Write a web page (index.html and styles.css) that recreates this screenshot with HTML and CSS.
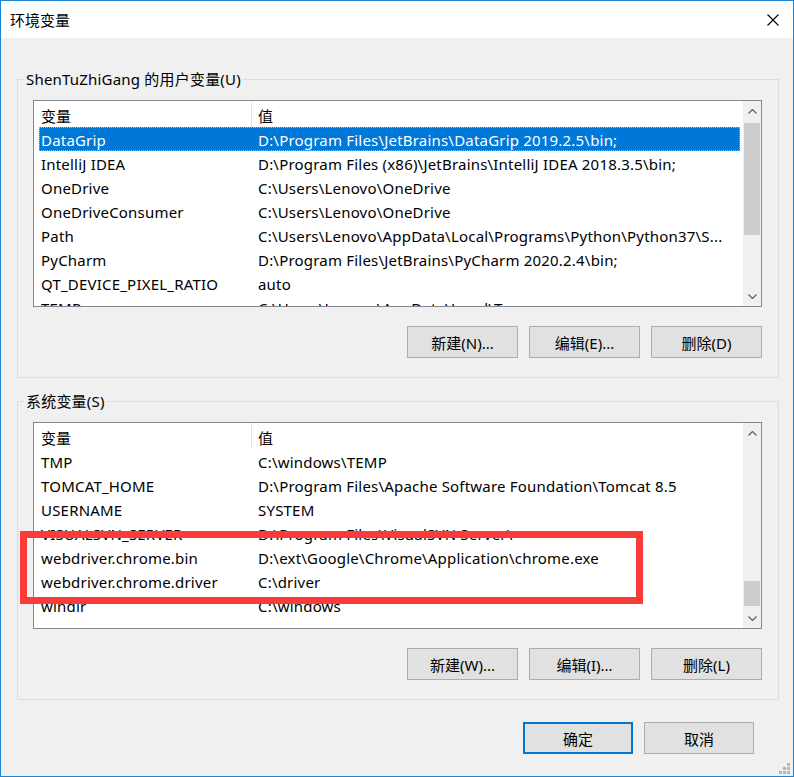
FILE: index.html
```html
<!DOCTYPE html>
<html lang="zh-CN">
<head>
    <meta charset="UTF-8">
    <title>环境变量</title>
    <link rel="stylesheet" href="styles.css">
</head>
<body>
<div class="window">

    <div class="titlebar">
        <span class="title">环境变量</span>
        <svg class="close" width="12" height="12" viewBox="0 0 12 12">
            <path d="M0.5 0.5 L11.5 11.5 M11.5 0.5 L0.5 11.5" stroke="#000" stroke-width="1.1" fill="none"/>
        </svg>
    </div>

    <!-- user variables -->
    <fieldset class="group group-user">
        <legend>ShenTuZhiGang 的用户变量(U)</legend>
        <div class="group-body">
            <div class="list">
                <div class="list-main">
                    <div class="list-head">
                        <div class="col-name">变量</div>
                        <div class="col-value">值</div>
                    </div>
                    <div class="rows">
                        <div class="row selected"><span class="name">DataGrip</span><span class="value">D:\Program Files\JetBrains\DataGrip 2019.2.5\bin;</span></div>
                        <div class="row"><span class="name">IntelliJ IDEA</span><span class="value">D:\Program Files (x86)\JetBrains\IntelliJ IDEA 2018.3.5\bin;</span></div>
                        <div class="row"><span class="name">OneDrive</span><span class="value">C:\Users\Lenovo\OneDrive</span></div>
                        <div class="row"><span class="name">OneDriveConsumer</span><span class="value">C:\Users\Lenovo\OneDrive</span></div>
                        <div class="row"><span class="name">Path</span><span class="value">C:\Users\Lenovo\AppData\Local\Programs\Python\Python37\S...</span></div>
                        <div class="row"><span class="name">PyCharm</span><span class="value">D:\Program Files\JetBrains\PyCharm 2020.2.4\bin;</span></div>
                        <div class="row"><span class="name">QT_DEVICE_PIXEL_RATIO</span><span class="value">auto</span></div>
                        <div class="row"><span class="name">TEMP</span><span class="value">C:\Users\Lenovo\AppData\Local\Temp</span></div>
                    </div>
                </div>
                <div class="scrollbar">
                    <div class="arrow">
                        <svg width="9" height="5" viewBox="0 0 9 5"><polyline points="0.5,4.5 4.5,0.5 8.5,4.5" fill="none" stroke="#606060" stroke-width="1.2"/></svg>
                    </div>
                    <div class="track"><div class="thumb thumb-user"></div></div>
                    <div class="arrow">
                        <svg width="9" height="5" viewBox="0 0 9 5"><polyline points="0.5,0.5 4.5,4.5 8.5,0.5" fill="none" stroke="#606060" stroke-width="1.2"/></svg>
                    </div>
                </div>
            </div>
            <div class="actions">
                <button>新建(N)...</button>
                <button>编辑(E)...</button>
                <button>删除(D)</button>
            </div>
        </div>
    </fieldset>

    <!-- system variables -->
    <fieldset class="group group-system">
        <legend>系统变量(S)</legend>
        <div class="group-body">
            <div class="list">
                <div class="list-main">
                    <div class="list-head">
                        <div class="col-name">变量</div>
                        <div class="col-value">值</div>
                    </div>
                    <div class="rows">
                        <div class="row"><span class="name">TMP</span><span class="value">C:\windows\TEMP</span></div>
                        <div class="row"><span class="name">TOMCAT_HOME</span><span class="value">D:\Program Files\Apache Software Foundation\Tomcat 8.5</span></div>
                        <div class="row"><span class="name">USERNAME</span><span class="value">SYSTEM</span></div>
                        <div class="row"><span class="name">VISUALSVN_SERVER</span><span class="value">D:\Program Files\VisualSVN Server\</span></div>
                        <div class="row"><span class="name">webdriver.chrome.bin</span><span class="value">D:\ext\Google\Chrome\Application\chrome.exe</span></div>
                        <div class="row"><span class="name">webdriver.chrome.driver</span><span class="value">C:\driver</span></div>
                        <div class="row"><span class="name">windir</span><span class="value">C:\windows</span></div>
                    </div>
                </div>
                <div class="scrollbar">
                    <div class="arrow">
                        <svg width="9" height="5" viewBox="0 0 9 5"><polyline points="0.5,4.5 4.5,0.5 8.5,4.5" fill="none" stroke="#606060" stroke-width="1.2"/></svg>
                    </div>
                    <div class="track"><div class="thumb thumb-system"></div></div>
                    <div class="arrow">
                        <svg width="9" height="5" viewBox="0 0 9 5"><polyline points="0.5,0.5 4.5,4.5 8.5,0.5" fill="none" stroke="#606060" stroke-width="1.2"/></svg>
                    </div>
                </div>
            </div>
            <div class="actions">
                <button>新建(W)...</button>
                <button>编辑(I)...</button>
                <button>删除(L)</button>
            </div>
        </div>
    </fieldset>

    <div class="footer">
        <button class="ok">确定</button>
        <button>取消</button>
    </div>

    <!-- highlight box around the webdriver entries -->
    <div class="mark"></div>

    <svg class="grip" width="11" height="11" viewBox="0 0 11 11">
        <rect x="8" y="0" width="3" height="3" fill="#b4b4b4"/>
        <rect x="4" y="4" width="3" height="3" fill="#b4b4b4"/>
        <rect x="8" y="4" width="3" height="3" fill="#b4b4b4"/>
        <rect x="0" y="8" width="3" height="3" fill="#b4b4b4"/>
        <rect x="4" y="8" width="3" height="3" fill="#b4b4b4"/>
        <rect x="8" y="8" width="3" height="3" fill="#b4b4b4"/>
    </svg>
</div>
</body>
</html>
```

FILE: styles.css
```css
body {
    margin: 0;
    font-family: "Noto Sans", "Noto Sans CJK SC", sans-serif;
    font-size: 15px;
    color: #000;
}

.window {
    position: relative;
    width: 794px;
    height: 777px;
    box-sizing: border-box;
    border: 1px solid #1a84d8;
    background: #f0f0f0;
    overflow: hidden;
}

/* Title bar */
.titlebar {
    height: 37px;
    background: #fff;
    display: flex;
    align-items: center;
    justify-content: space-between;
    padding: 0 14px 0 9px;
}

.title {
    font-family: "Noto Sans CJK SC", sans-serif;
    font-size: 15px;
}

/* Group boxes */
.group {
    border: 1px solid #dcdcdc;
    margin: 32px 14px 0 16px;
    padding: 0;
    min-width: 0;
}

.group-system {
    margin-top: 14px;
}

.group legend {
    margin-left: 6px;
    padding: 0 2px;
    line-height: 18px;
    font-family: "Noto Sans", "Noto Sans CJK SC", sans-serif;
    letter-spacing: 0.2px;
}

.group-body {
    padding: 12px 16px 19px 15px;
}

/* List view */
.list {
    display: flex;
    height: 207px;
    box-sizing: border-box;
    border: 1px solid #828790;
    background: #fff;
}

.list-main {
    flex: 1;
    overflow: hidden;
}

.list-head {
    display: flex;
    height: 26px;
    line-height: 30px;
    font-family: "Noto Sans CJK SC", sans-serif;
}

.col-name {
    width: 218px;
    flex: none;
    box-sizing: border-box;
    padding-left: 7px;
    border-right: 1px solid #e5e5e5;
}

.col-value {
    padding-left: 6px;
}

.rows {
    padding: 0 3px 0 5px;
}

.row {
    display: flex;
    height: 24px;
    line-height: 26px;
    white-space: nowrap;
    letter-spacing: 0.2px;
}

.row .name {
    width: 213px;
    flex: none;
    box-sizing: border-box;
    padding-left: 2px;
}

.row .value {
    padding-left: 6px;
}

.row.selected {
    background: #0078d7;
    color: #fff;
    outline: 1px dotted #f2a65a;
    outline-offset: -1px;
}

/* Scroll bar */
.scrollbar {
    width: 18px;
    flex: none;
    display: flex;
    flex-direction: column;
    background: #f0f0f0;
}

.arrow {
    height: 20px;
    display: flex;
    align-items: center;
    justify-content: center;
    flex: none;
}

.track {
    flex: 1;
}

.thumb {
    background: #cdcdcd;
    margin: 0 1px;
}

.thumb-user {
    margin-top: 2px;
    height: 112px;
}

.thumb-system {
    margin-top: 138px;
    height: 25px;
}

/* Buttons */
.actions {
    display: flex;
    justify-content: flex-end;
    gap: 11px;
    margin-top: 19px;
}

button {
    width: 111px;
    height: 32px;
    padding: 0;
    background: #e1e1e1;
    border: 1px solid #adadad;
    font-family: "Noto Sans", "Noto Sans CJK SC", sans-serif;
    font-size: 15px;
    color: #000;
}

.footer {
    display: flex;
    justify-content: flex-end;
    gap: 11px;
    margin: 22px 39px 0 0;
}

.footer button {
    width: 110px;
}

.footer .ok {
    border: 2px solid #0078d7;
}

.mark {
    position: absolute;
    left: 19px;
    top: 530px;
    width: 623px;
    height: 73px;
    box-sizing: border-box;
    border: 7px solid #fb3a3a;
}

.grip {
    position: absolute;
    right: 3px;
    bottom: 2px;
}
```
